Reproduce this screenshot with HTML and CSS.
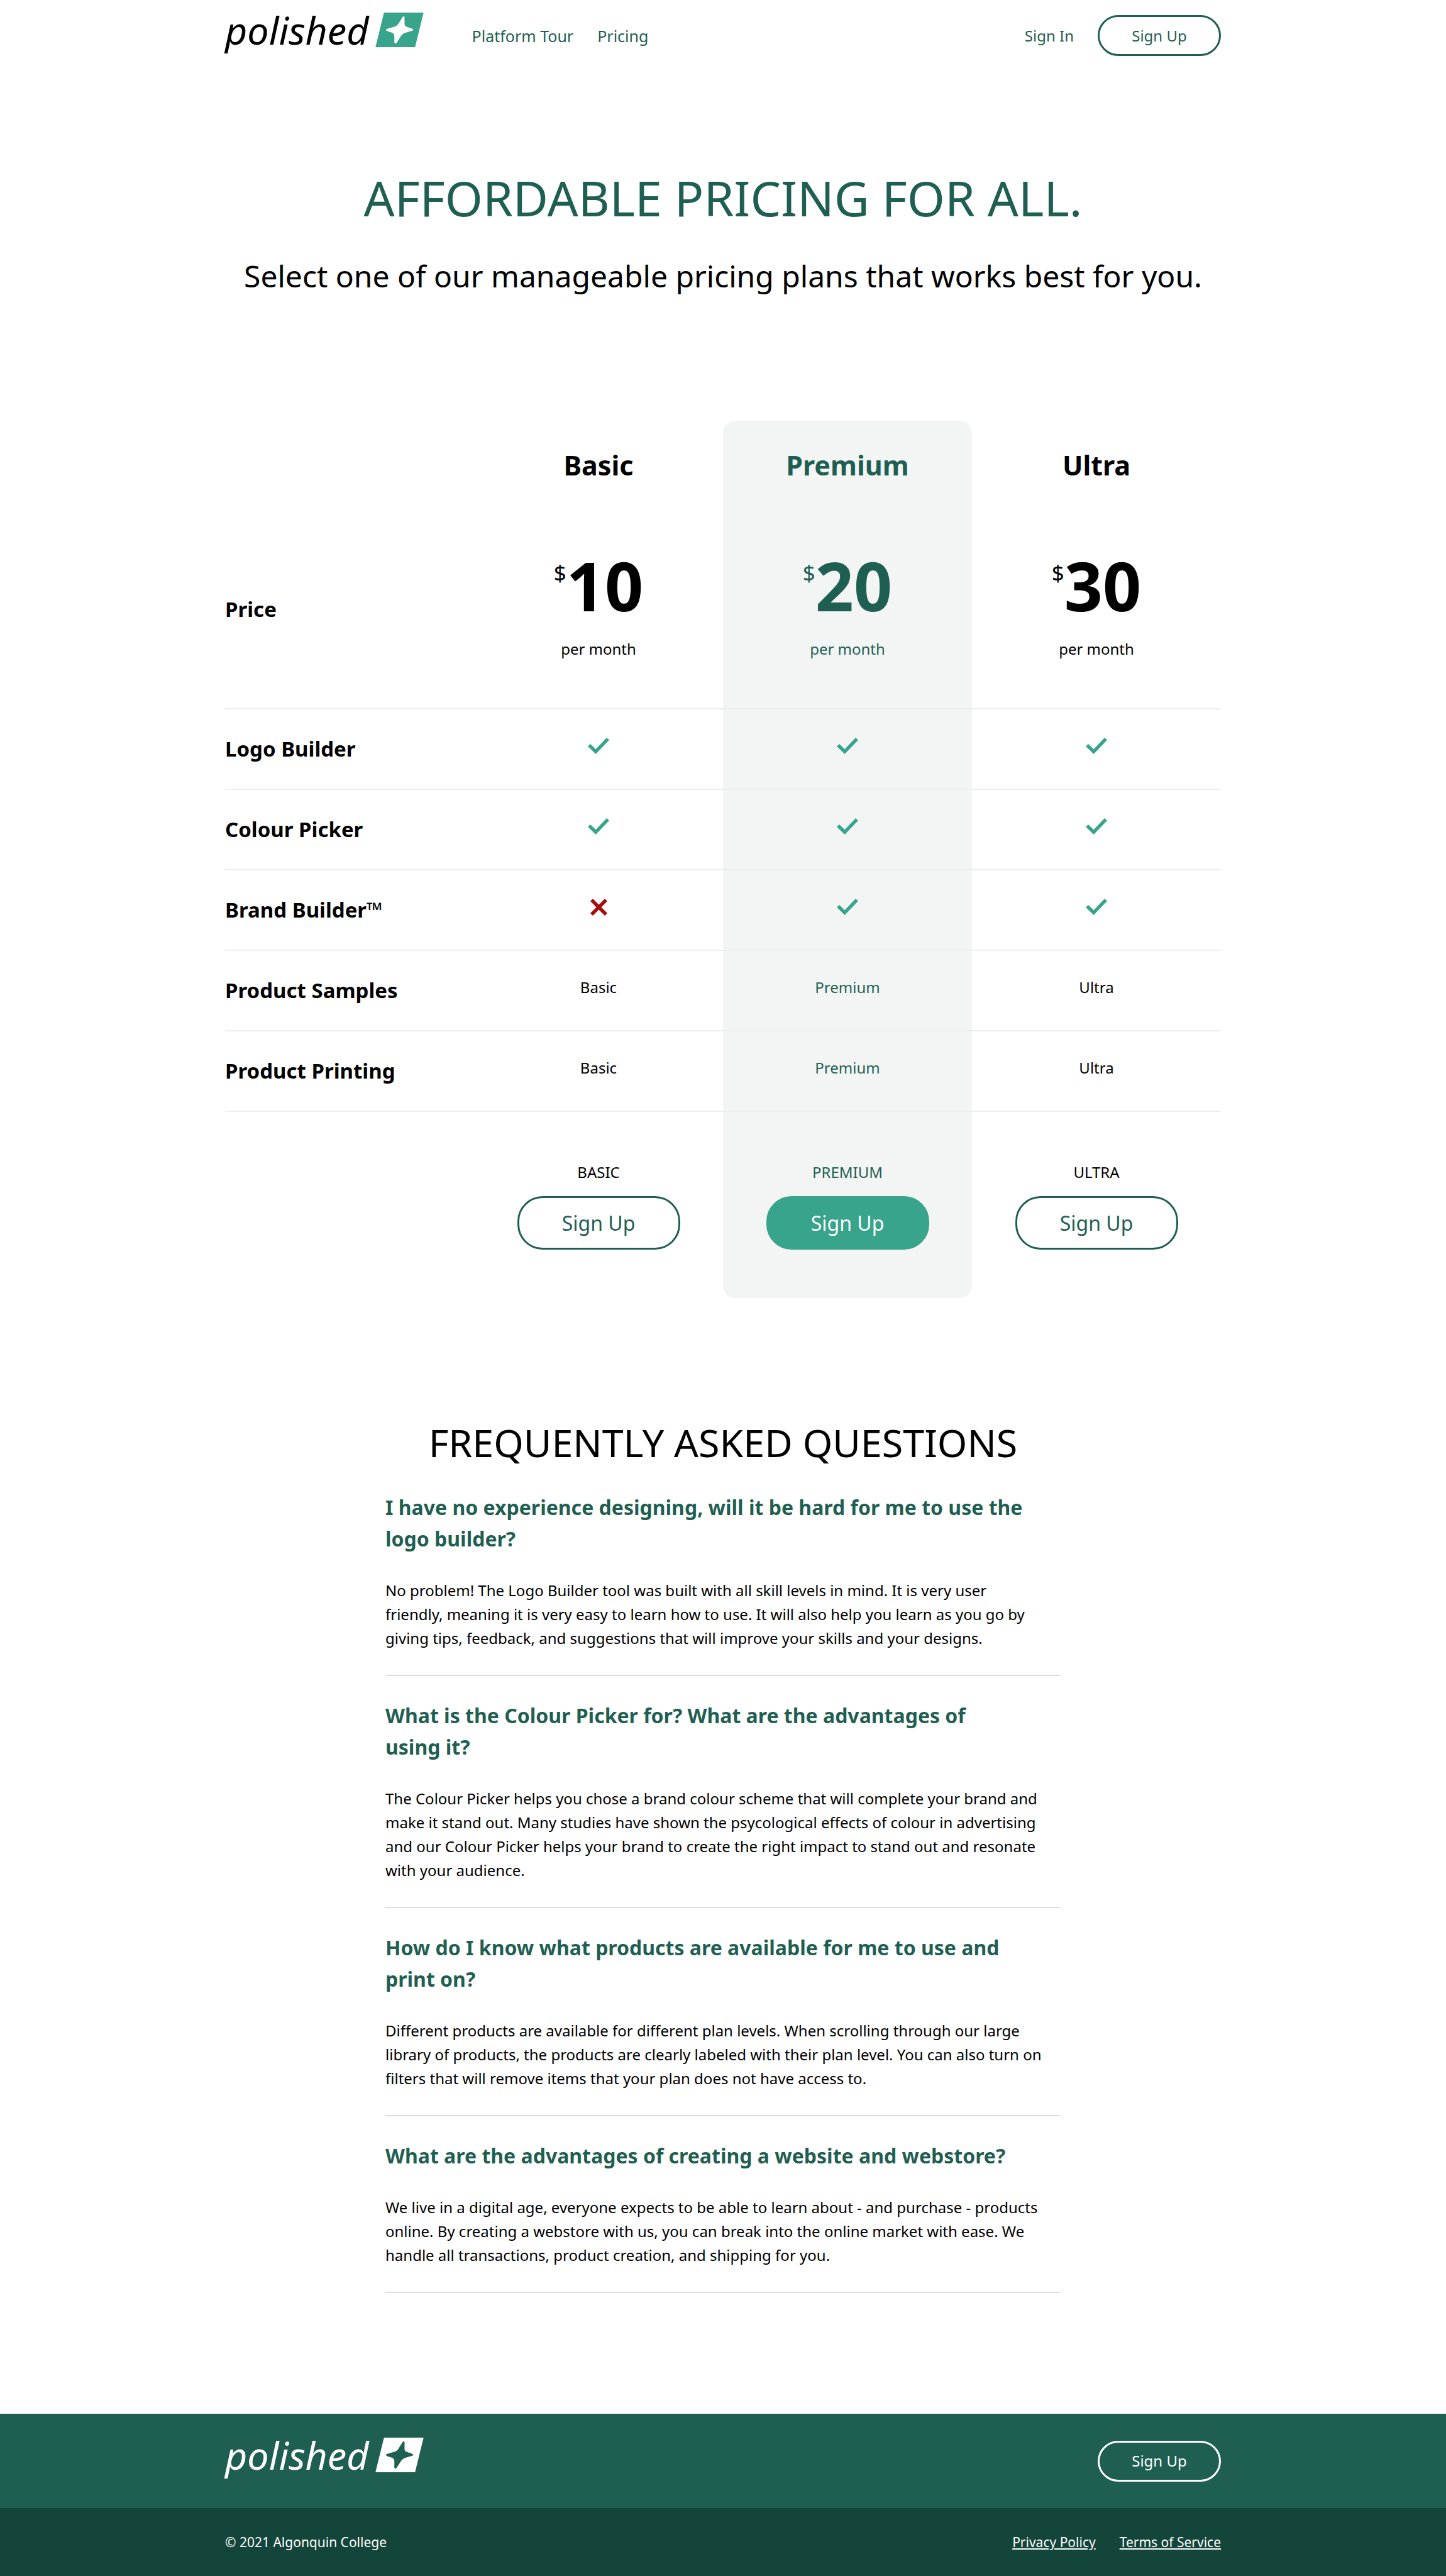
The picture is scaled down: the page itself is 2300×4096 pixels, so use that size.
FILE: index.html
```html
<!DOCTYPE html>
<html lang="en">
<head>
<meta charset="utf-8">
<meta name="viewport" content="width=device-width, initial-scale=1">
<title>Pricing – Polished</title>
<link rel="stylesheet" href="styles.css">
</head>
<body>
<svg class="sprite" aria-hidden="true">
  <symbol id="mark" viewBox="0 0 288 207"><path fill-rule="evenodd" d="M51 0H288L237 207H0ZM161 28Q165 22 171 23Q175 24 174 31V66Q173 80 186 85L218 96Q226 98 226 103Q226 107 218 109L180 120Q163 124 152 141L128 179Q125 185 119 185Q113 185 113 178V143Q113 125 100 120L70 111Q63 109 63 103Q63 98 71 97L110 86Q129 81 138 66Z"/></symbol>
  <symbol id="check" viewBox="0 0 42 32"><path d="M0 17L5 12.3L15.6 22.4L37 0L42 4.7L15.6 32Z"/></symbol>
  <symbol id="cross" viewBox="0 0 34 34"><path d="M5 0L17 12L29 0L34 5L22 17L34 29L29 34L17 22L5 34L0 29L12 17L0 5Z"/></symbol>
</svg>

<header class="container site-header">
  <a class="logo" href="#"><span>polished</span><svg class="mark"><use href="#mark"/></svg></a>
  <nav class="nav">
    <a href="#">Platform Tour</a>
    <a href="#">Pricing</a>
  </nav>
  <div class="account">
    <a href="#">Sign In</a>
    <button class="btn" type="button">Sign Up</button>
  </div>
</header>

<main>
  <section class="hero container">
    <h1>AFFORDABLE PRICING FOR ALL.</h1>
    <p>Select one of our manageable pricing plans that works best for you.</p>
  </section>

  <section class="container">
    <table class="plans">
      <thead>
        <tr><td></td><th scope="col">Basic</th><th scope="col" class="featured">Premium</th><th scope="col">Ultra</th></tr>
      </thead>
      <tbody>
        <tr class="price">
          <th scope="row">Price</th>
          <td><div class="amount"><span>$</span><strong>10</strong></div><p>per month</p></td>
          <td class="featured"><div class="amount"><span>$</span><strong>20</strong></div><p>per month</p></td>
          <td><div class="amount"><span>$</span><strong>30</strong></div><p>per month</p></td>
        </tr>
        <tr>
          <th scope="row">Logo Builder</th>
          <td><svg class="check" role="img" aria-label="Yes"><use href="#check"/></svg></td>
          <td class="featured"><svg class="check" role="img" aria-label="Yes"><use href="#check"/></svg></td>
          <td><svg class="check" role="img" aria-label="Yes"><use href="#check"/></svg></td>
        </tr>
        <tr>
          <th scope="row">Colour Picker</th>
          <td><svg class="check" role="img" aria-label="Yes"><use href="#check"/></svg></td>
          <td class="featured"><svg class="check" role="img" aria-label="Yes"><use href="#check"/></svg></td>
          <td><svg class="check" role="img" aria-label="Yes"><use href="#check"/></svg></td>
        </tr>
        <tr>
          <th scope="row">Brand Builder™</th>
          <td><svg class="cross" role="img" aria-label="No"><use href="#cross"/></svg></td>
          <td class="featured"><svg class="check" role="img" aria-label="Yes"><use href="#check"/></svg></td>
          <td><svg class="check" role="img" aria-label="Yes"><use href="#check"/></svg></td>
        </tr>
        <tr><th scope="row">Product Samples</th><td>Basic</td><td class="featured">Premium</td><td>Ultra</td></tr>
        <tr><th scope="row">Product Printing</th><td>Basic</td><td class="featured">Premium</td><td>Ultra</td></tr>
      </tbody>
      <tfoot>
        <tr>
          <td></td>
          <td><p>BASIC</p><button class="btn btn-large" type="button">Sign Up</button></td>
          <td class="featured"><p>PREMIUM</p><button class="btn btn-large btn-filled" type="button">Sign Up</button></td>
          <td><p>ULTRA</p><button class="btn btn-large" type="button">Sign Up</button></td>
        </tr>
      </tfoot>
    </table>
  </section>

  <section class="faq">
    <h2>FREQUENTLY ASKED QUESTIONS</h2>
    <article>
      <h3>I have no experience designing, will it be hard for me to use the logo builder?</h3>
      <p>No problem! The Logo Builder tool was built with all skill levels in mind. It is very user<br>friendly, meaning it is very easy to learn how to use. It will also help you learn as you go by giving tips, feedback, and suggestions that will improve your skills and your designs.</p>
    </article>
    <article>
      <h3>What is the Colour Picker for? What are the advantages of<br>using it?</h3>
      <p>The Colour Picker helps you chose a brand colour scheme that will complete your brand and make it stand out. Many studies have shown the psycological effects of colour in advertising and our Colour Picker helps your brand to create the right impact to stand out and resonate with your audience.</p>
    </article>
    <article>
      <h3>How do I know what products are available for me to use and<br>print on?</h3>
      <p>Different products are available for different plan levels. When scrolling through our large library of products, the products are clearly labeled with their plan level. You can also turn on filters that will remove items that your plan does not have access to.</p>
    </article>
    <article>
      <h3>What are the advantages of creating a website and webstore?</h3>
      <p>We live in a digital age, everyone expects to be able to learn about - and purchase - products online. By creating a webstore with us, you can break into the online market with ease. We handle all transactions, product creation, and shipping for you.</p>
    </article>
  </section>
</main>

<footer class="site-footer">
  <div class="footer-main">
    <div class="container footer-row">
      <a class="logo" href="#"><span>polished</span><svg class="mark"><use href="#mark"/></svg></a>
      <button class="btn btn-light" type="button">Sign Up</button>
    </div>
  </div>
  <div class="footer-legal">
    <div class="container footer-row">
      <small>© 2021 Algonquin College</small>
      <nav class="legal-links">
        <a href="#">Privacy Policy</a>
        <a href="#">Terms of Service</a>
      </nav>
    </div>
  </div>
</footer>
</body>
</html>
```

FILE: styles.css
```css
:root {
  --green: #1f5f52;
  --green-dark: #14453a;
  --teal: #38a48c;
  --red: #a60b0b;
  --tint: #f3f5f4;
}

* {
  box-sizing: border-box;
}

body {
  margin: 0;
  background: #fff;
  color: #000;
  font: 24px/38px "Noto Sans", sans-serif;
}

h1, h2, h3, p {
  margin: 0;
}

a {
  color: inherit;
  text-decoration: none;
}

.sprite {
  display: none;
}

.container {
  width: 100%;
  max-width: 1584px;
  margin: 0 auto;
}

/* Logo */
.logo {
  display: flex;
  align-items: center;
  gap: 10px;
  padding-bottom: 19px;
  color: #000;
  font-size: 61px;
  font-style: italic;
  line-height: 55px;
}

.mark {
  width: 77px;
  height: 55px;
  fill: var(--teal);
}

/* Buttons */
.btn {
  min-width: 196px;
  height: 65px;
  padding: 0 48px;
  border: 3px solid var(--green);
  border-radius: 40px;
  background: transparent;
  color: var(--green);
  font: inherit;
  line-height: 32px;
}

.btn-large {
  min-width: 259px;
  height: 85px;
  font-size: 32px;
}

.btn-filled {
  border-color: var(--teal);
  background: var(--teal);
  color: #fff;
}

.btn-light {
  border-color: #fff;
  color: #fff;
}

/* Header */
.site-header {
  display: flex;
  align-items: center;
  padding: 24px 0;
  height: 113px;
  color: var(--green);
}

.nav {
  display: flex;
  gap: 38px;
  margin-left: 77px;
  font-size: 25px;
}

.account {
  display: flex;
  align-items: center;
  gap: 38px;
  margin-left: auto;
}

/* Hero */
.hero {
  padding: 152px 0 198px;
  text-align: center;
}

.hero h1 {
  margin-bottom: 42px;
  color: var(--green);
  font-size: 77px;
  font-weight: 400;
  line-height: 100px;
}

.hero p {
  font-size: 48px;
  line-height: 64px;
}

/* Plans */
.plans {
  width: 100%;
  table-layout: fixed;
  border-spacing: 0;
  text-align: center;
}

.plans th,
.plans td {
  padding: 0;
}

.plans thead th {
  height: 142px;
  font-size: 43px;
}

.plans tbody th,
.plans tbody td {
  height: 128px;
  border-bottom: 2px solid #eee;
}

.plans tbody th {
  text-align: left;
  font-size: 33px;
}

.plans tbody td {
  padding-top: 39px;
  vertical-align: top;
}

.plans .price td {
  padding: 64px 0 75px;
}

.plans .featured {
  background: var(--tint);
  color: var(--green);
}

.plans thead .featured {
  border-radius: 19px 19px 0 0;
}

.plans tfoot .featured {
  border-radius: 0 0 19px 19px;
}

.plans tfoot td {
  padding: 77px 0;
}

.plans tfoot p {
  margin-bottom: 19px;
}

.plans .btn {
  display: block;
  margin: 0 auto;
}

.amount {
  display: flex;
  justify-content: center;
  margin-bottom: 26px;
}

.amount span {
  font-size: 35px;
  line-height: 72px;
}

.amount strong {
  font-size: 107px;
  line-height: 112px;
}

.check,
.cross {
  display: block;
  margin: 6px auto;
}

.check {
  width: 34px;
  height: 26px;
  fill: var(--teal);
}

.cross {
  width: 27px;
  height: 27px;
  fill: var(--red);
}

/* FAQ */
.faq {
  width: 100%;
  max-width: 1074px;
  margin: 0 auto;
  padding: 190px 0 192px;
}

.faq h2 {
  font-size: 61px;
  font-weight: 400;
  line-height: 80px;
  text-align: center;
}

.faq article {
  padding: 38px 0 39px;
  border-bottom: 2px solid #ddd;
}

.faq h3 {
  margin-bottom: 38px;
  color: var(--green);
  font-size: 32px;
  line-height: 50px;
}

/* Footer */
.site-footer {
  color: #fff;
}

.footer-main {
  padding: 38px 0;
  background: var(--green);
}

.footer-legal {
  padding: 35px 0;
  background: var(--green-dark);
  font-size: 21px;
}

.footer-row {
  display: flex;
  align-items: center;
  justify-content: space-between;
}

.site-footer .logo {
  color: #fff;
}

.site-footer .mark {
  fill: #fff;
}

.legal-links {
  display: flex;
  gap: 38px;
}

.legal-links a {
  text-decoration: underline;
}

small {
  font-size: inherit;
}
```
